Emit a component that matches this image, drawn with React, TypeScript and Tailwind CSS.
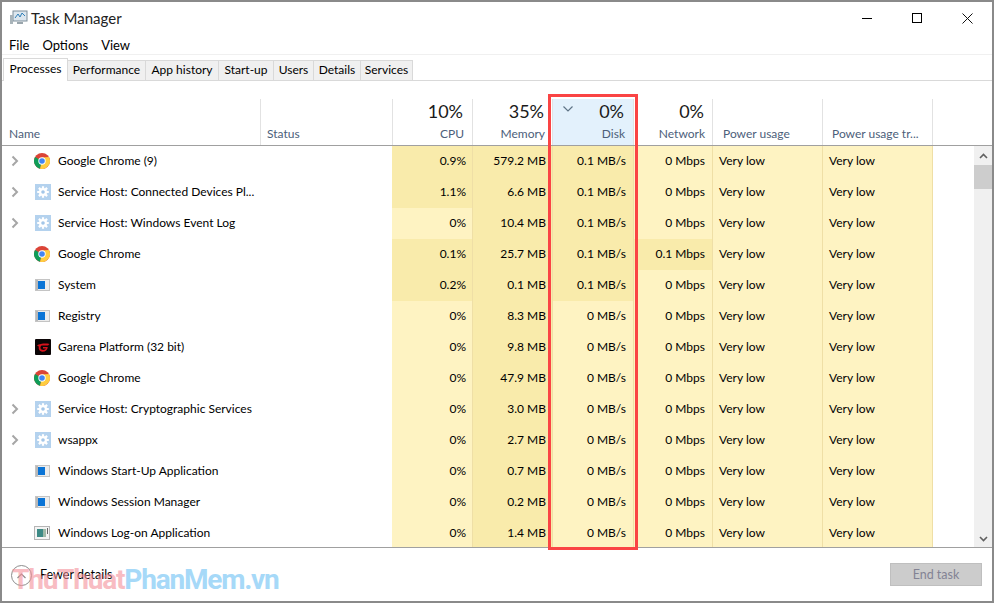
const rows = [
  { name: "Google Chrome (9)", icon: "chrome", arrow: true, cpu: "0.9%", mem: "579.2 MB", disk: "0.1 MB/s", net: "0 Mbps", cpuHot: true, diskHot: true },
  { name: "Service Host: Connected Devices Pl...", icon: "gear", arrow: true, cpu: "1.1%", mem: "6.6 MB", disk: "0.1 MB/s", net: "0 Mbps", cpuHot: true, diskHot: true },
  { name: "Service Host: Windows Event Log", icon: "gear", arrow: true, cpu: "0%", mem: "10.4 MB", disk: "0.1 MB/s", net: "0 Mbps", diskHot: true },
  { name: "Google Chrome", icon: "chrome", cpu: "0.1%", mem: "25.7 MB", disk: "0.1 MB/s", net: "0.1 Mbps", cpuHot: true, diskHot: true, netHot: true },
  { name: "System", icon: "win", cpu: "0.2%", mem: "0.1 MB", disk: "0.1 MB/s", net: "0 Mbps", cpuHot: true, diskHot: true },
  { name: "Registry", icon: "win", cpu: "0%", mem: "8.3 MB", disk: "0 MB/s", net: "0 Mbps" },
  { name: "Garena Platform (32 bit)", icon: "garena", cpu: "0%", mem: "9.8 MB", disk: "0 MB/s", net: "0 Mbps" },
  { name: "Google Chrome", icon: "chrome", cpu: "0%", mem: "47.9 MB", disk: "0 MB/s", net: "0 Mbps" },
  { name: "Service Host: Cryptographic Services", icon: "gear", arrow: true, cpu: "0%", mem: "3.0 MB", disk: "0 MB/s", net: "0 Mbps" },
  { name: "wsappx", icon: "gear", arrow: true, cpu: "0%", mem: "2.7 MB", disk: "0 MB/s", net: "0 Mbps" },
  { name: "Windows Start-Up Application", icon: "win", cpu: "0%", mem: "0.7 MB", disk: "0 MB/s", net: "0 Mbps" },
  { name: "Windows Session Manager", icon: "win", cpu: "0%", mem: "0.2 MB", disk: "0 MB/s", net: "0 Mbps" },
  { name: "Windows Log-on Application", icon: "logon", cpu: "0%", mem: "1.4 MB", disk: "0 MB/s", net: "0 Mbps" },
];

const tabs = [
  { label: "Performance", width: "w-[78px]" },
  { label: "App history", width: "w-[73px]" },
  { label: "Start-up", width: "w-[55px]" },
  { label: "Users", width: "w-[40px]" },
  { label: "Details", width: "w-[47px]" },
  { label: "Services", width: "w-[52px]" },
];

function ProcessIcon({ type }: { type: string }) {
  if (type === "chrome") {
    return (
      <svg width="16" height="16" viewBox="0 0 16 16">
        <circle cx="8" cy="8" r="8" fill="#db4437" />
        <path d="M8 8 L1.07 4 A8 8 0 0 0 6 15.75 Z" fill="#0f9d58" />
        <path d="M8 4.5 L14.9 4 A8 8 0 0 1 6 15.75 L8 8 Z" fill="#ffcd40" />
        <circle cx="8" cy="8" r="3.7" fill="#fff" />
        <circle cx="8" cy="8" r="2.8" fill="#4285f4" />
      </svg>
    );
  }
  if (type === "gear") {
    return (
      <svg className="ml-[1px]" width="16" height="16" viewBox="0 0 16 16">
        <rect width="16" height="16" fill="#b4d2ee" />
        <g stroke="#fff" strokeWidth="2.2">
          <path d="M8 2.2v11.6M2.2 8h11.6M3.9 3.9l8.2 8.2M12.1 3.9l-8.2 8.2" />
        </g>
        <circle cx="8" cy="8" r="4" fill="#fff" />
        <circle cx="8" cy="8" r="1.8" fill="#a3c6e8" />
      </svg>
    );
  }
  if (type === "win") {
    return (
      <svg className="ml-[1px]" width="16" height="16" viewBox="0 0 16 16">
        <rect y="2" width="15" height="12" fill="#c4c4c4" />
        <rect x="1" y="3" width="13" height="10" fill="#ececec" />
        <rect x="1" y="3" width="2" height="10" fill="#b8b8b8" />
        <rect x="3" y="4" width="7" height="8" fill="#0a74d6" />
      </svg>
    );
  }
  if (type === "logon") {
    return (
      <svg width="17" height="16" viewBox="0 0 17 16">
        <rect y="1" width="16" height="14" fill="#b5b5b5" />
        <rect x="1" y="2" width="14" height="12" fill="#f4f4f4" />
        <rect x="3" y="4" width="6" height="8" fill="#3d8a86" />
        <rect x="9" y="4" width="3" height="8" fill="#9fb9a8" />
        <rect x="13" y="3" width="1" height="6" fill="#666" />
      </svg>
    );
  }
  return (
    <svg className="ml-[1px]" width="16" height="16" viewBox="0 0 16 16">
      <rect width="16" height="16" rx="1" fill="#0b0506" />
      <path d="M2 6.5C5 4.5 11 4 14.5 5L13 6.5H6.5C5 7.5 5 10 7 10.8C9 11.3 10.5 10.5 11 9.5H8V8H12.8C12.5 11 10 13 7 12.7C4.5 12.4 3.2 10 3.8 7.5Z" fill="#d8121c" />
    </svg>
  );
}

function Chevron() {
  return (
    <svg width="8" height="12" viewBox="0 0 8 12" fill="none" stroke="#a6a6a6" strokeWidth="2">
      <path d="M1.5 1.5L6 6L1.5 10.5" />
    </svg>
  );
}

function HeadCol({ width, pad, pct, label }: { width: string; pad: string; pct: string; label: string }) {
  return (
    <div className={`${width} ${pad} shrink-0 border-r border-[#e2e2e2] flex flex-col justify-between items-end`}>
      <span className="text-[18px] leading-[24px] text-[#1a1a1a] pr-[1px]">{pct}</span>
      <span className="text-[12px] leading-[16px] text-[#4c607a] mb-[3px]">{label}</span>
    </div>
  );
}

export default function App() {
  return (
    <div className="relative w-[994px] h-[603px] bg-white border-2 border-[#8a8a8a] overflow-hidden text-[12px] text-black font-['Lato','Noto_Sans',sans-serif]">
      {/* title bar */}
      <div className="h-[32px] flex items-center pl-[8px]">
        <svg width="18" height="16" viewBox="0 0 18 16">
          <rect x="3" y="1" width="14" height="10" fill="#dce6ee" stroke="#7d8d99" />
          <path d="M5 8L8 4L10 7L12 3L15 6" fill="none" stroke="#2f7fb8" strokeWidth="1" />
          <rect x="0" y="5" width="3" height="9" fill="#a9b4ba" />
          <rect x="7" y="12" width="6" height="2" fill="#9aa6ad" />
        </svg>
        <span className="ml-[3px] text-[15px] text-[#222]">Task Manager</span>
        <div className="ml-auto flex items-center">
          <div className="w-[50px] flex justify-center">
            <div className="w-[10px] h-[1px] bg-black" />
          </div>
          <div className="w-[50px] flex justify-center">
            <div className="w-[10px] h-[10px] border border-black" />
          </div>
          <div className="w-[50px] flex justify-center">
            <svg width="11" height="11" viewBox="0 0 11 11" stroke="#111" strokeWidth="1">
              <path d="M0.5 0.5L10.5 10.5M10.5 0.5L0.5 10.5" />
            </svg>
          </div>
        </div>
      </div>

      {/* menu */}
      <div className="h-[21px] flex items-center gap-[13px] pl-[7px] pt-[4px] text-[13px] border-b border-[#f0f0f0]">
        <span>File</span>
        <span>Options</span>
        <span>View</span>
      </div>

      {/* tabs */}
      <div className="h-[26px] flex items-end pl-[1px] border-b border-[#d9d9d9]">
        <div className="h-[23px] w-[65px] pb-[2px] bg-white border border-b-0 border-[#d9d9d9] flex items-center justify-center mb-[-1px]">
          Processes
        </div>
        {tabs.map((t) => (
          <div key={t.label} className={`${t.width} h-[20px] pb-[2px] bg-[#f0f0f0] border border-l-0 border-b-0 border-[#d9d9d9] flex items-center justify-center`}>
            {t.label}
          </div>
        ))}
      </div>

      {/* column headers */}
      <div className="h-[65px] pt-[18px] flex border-b border-[#a0a0a0]">
        <div className="w-[259px] shrink-0 border-r border-[#e2e2e2] flex items-end pl-[7px] pb-[3px] leading-[16px] text-[#4c607a]">Name</div>
        <div className="w-[132px] shrink-0 border-r border-[#e2e2e2] flex items-end pl-[6px] pb-[3px] leading-[16px] text-[#4c607a]">Status</div>
        <HeadCol width="w-[80px]" pad="pr-[8px]" pct="10%" label="CPU" />
        <HeadCol width="w-[80px]" pad="pr-[7px]" pct="35%" label="Memory" />
        <div className="w-[81px] shrink-0 border-r border-[#e2e2e2] bg-[#e3f1fc] relative flex flex-col justify-between items-end pr-[8px]">
          <svg className="absolute left-[10px] top-[7px]" width="10" height="6" viewBox="0 0 10 6" fill="none" stroke="#5f7486" strokeWidth="1.2">
            <path d="M0.5 0.5L5 5L9.5 0.5" />
          </svg>
          <span className="text-[18px] leading-[24px] text-[#1a1a1a] pr-[1px]">0%</span>
          <span className="leading-[16px] text-[#4c607a] mb-[3px]">Disk</span>
        </div>
        <HeadCol width="w-[79px]" pad="pr-[7px]" pct="0%" label="Network" />
        <div className="w-[110px] shrink-0 border-r border-[#e2e2e2] flex items-end pl-[10px] pb-[3px] leading-[16px] text-[#4c607a]">Power usage</div>
        <div className="w-[110px] shrink-0 border-r border-[#e2e2e2] flex items-end pl-[9px] pb-[3px] leading-[16px] text-[#4c607a]">Power usage tr...</div>
      </div>

      {/* rows */}
      <div className="flex h-[401px]">
        <div className="flex-1 overflow-hidden">
          {rows.map((r, i) => (
            <div key={i} className="h-[31px] flex items-center">
              <div className="w-[390px] pb-[2px] shrink-0 flex items-center">
                <div className="w-[32px] pl-[9px] shrink-0 flex items-center">{r.arrow && <Chevron />}</div>
                <div className="w-[24px] shrink-0 flex items-center">
                  <ProcessIcon type={r.icon} />
                </div>
                <span className="whitespace-nowrap">{r.name}</span>
              </div>
              <div className={`w-[81px] h-full pb-[2px] shrink-0 flex items-center justify-end pr-[6px] border-r border-[#efdfa6] ${r.cpuHot ? "bg-[#f9ebab]" : "bg-[#fef3c2]"}`}>{r.cpu}</div>
              <div className="w-[80px] h-full pb-[2px] shrink-0 flex items-center justify-end pr-[6px] border-r border-[#efdfa6] bg-[#f9ebab]">{r.mem}</div>
              <div className={`w-[81px] h-full pb-[2px] shrink-0 flex items-center justify-end pr-[7px] border-r border-[#efdfa6] ${r.diskHot ? "bg-[#f9ebab]" : "bg-[#fef3c2]"}`}>{r.disk}</div>
              <div className={`w-[79px] h-full pb-[2px] shrink-0 flex items-center justify-end pr-[7px] border-r border-[#efdfa6] ${r.netHot ? "bg-[#f9ebab]" : "bg-[#fef3c2]"}`}>{r.net}</div>
              <div className="w-[110px] h-full pb-[2px] shrink-0 flex items-center pl-[6px] border-r border-[#efdfa6] bg-[#fef3c2]">Very low</div>
              <div className="w-[110px] h-full pb-[2px] shrink-0 flex items-center pl-[6px] border-r border-[#efdfa6] bg-[#fef3c2]">Very low</div>
            </div>
          ))}
        </div>
        <div className="w-[18px] shrink-0 bg-[#f0f0f0] flex flex-col items-center">
          <div className="h-[19px] flex items-center">
            <svg width="9" height="6" viewBox="0 0 9 6" fill="none" stroke="#606060" strokeWidth="1.6">
              <path d="M1 5L4.5 1.5L8 5" />
            </svg>
          </div>
          <div className="w-full h-[24px] bg-[#cdcdcd]" />
          <div className="mt-auto h-[17px] flex items-center">
            <svg width="9" height="6" viewBox="0 0 9 6" fill="none" stroke="#606060" strokeWidth="1.6">
              <path d="M1 1L4.5 4.5L8 1" />
            </svg>
          </div>
        </div>
      </div>

      {/* footer */}
      <div className="h-[54px] pt-[2px] border-t border-[#a0a0a0] flex items-center pl-[9px] pr-[10px] text-[12.5px]">
        <div className="w-[21px] h-[21px] rounded-full border border-[#8c8c8c] flex items-center justify-center">
          <svg width="9" height="6" viewBox="0 0 9 6" fill="none" stroke="#8c8c8c" strokeWidth="1.2">
            <path d="M0.5 5L4.5 1L8.5 5" />
          </svg>
        </div>
        <span className="ml-[8px]">Fewer details</span>
        <div className="ml-auto mt-[-2px] w-[92px] h-[23px] pt-[2px] bg-[#cccccc] border border-[#bfbfbf] flex items-center justify-center text-[#838394]">End task</div>
      </div>

      {/* annotation + watermark sit on top of the screenshot */}
      <div className="absolute left-[546px] top-[92px] w-[90px] h-[456px] border-[3px] border-[#fa4444] pointer-events-none" />
      <div className="absolute left-[10px] top-[560px] text-[28px] leading-[36px] font-bold tracking-[-1.2px] whitespace-nowrap font-['Roboto',sans-serif] opacity-60 pointer-events-none">
        <span className="text-[#f4909a]">ThuThuat</span>
        <span className="text-[#6cc0f5]">PhanMem.vn</span>
      </div>
    </div>
  );
}
